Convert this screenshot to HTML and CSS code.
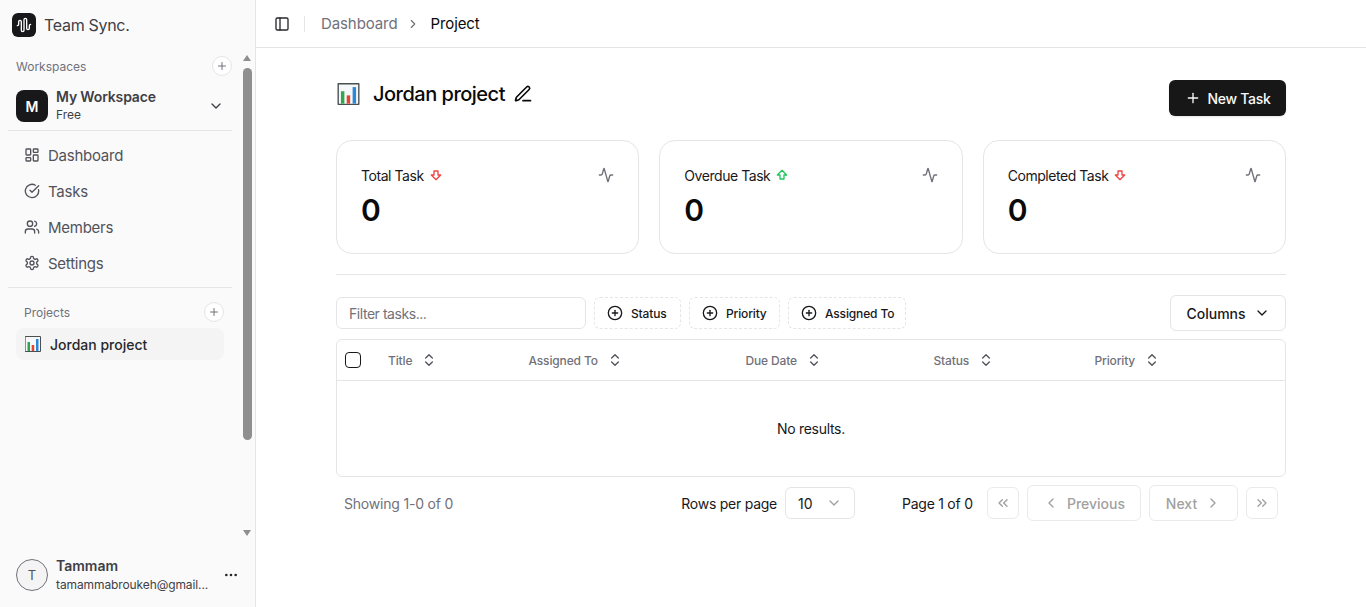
FILE: index.html
```html
<!DOCTYPE html>
<html lang="en">
<head>
    <meta charset="UTF-8">
    <meta name="viewport" content="width=device-width, initial-scale=1.0">
    <title>Team Sync</title>
    <link rel="stylesheet" href="styles.css">
</head>
<body>
    <svg class="sprite" xmlns="http://www.w3.org/2000/svg">
        <symbol id="i-wave" viewBox="0 0 24 24"><path d="M2 13a2 2 0 0 0 2-2V7a2 2 0 0 1 4 0v13a2 2 0 0 0 4 0V4a2 2 0 0 1 4 0v13a2 2 0 0 0 4 0v-4a2 2 0 0 1 2-2"/></symbol>
        <symbol id="i-plus" viewBox="0 0 24 24"><path d="M5 12h14"/><path d="M12 5v14"/></symbol>
        <symbol id="i-down" viewBox="0 0 24 24"><path d="m6 9 6 6 6-6"/></symbol>
        <symbol id="i-left" viewBox="0 0 24 24"><path d="m15 18-6-6 6-6"/></symbol>
        <symbol id="i-right" viewBox="0 0 24 24"><path d="m9 18 6-6-6-6"/></symbol>
        <symbol id="i-first" viewBox="0 0 24 24"><path d="m11 17-5-5 5-5"/><path d="m18 17-5-5 5-5"/></symbol>
        <symbol id="i-last" viewBox="0 0 24 24"><path d="m6 17 5-5-5-5"/><path d="m13 17 5-5-5-5"/></symbol>
        <symbol id="i-grid" viewBox="0 0 24 24"><rect x="3" y="3" width="7" height="9" rx="1"/><rect x="14" y="3" width="7" height="5" rx="1"/><rect x="14" y="12" width="7" height="9" rx="1"/><rect x="3" y="16" width="7" height="5" rx="1"/></symbol>
        <symbol id="i-check" viewBox="0 0 24 24"><path d="M21.801 10A10 10 0 1 1 17 3.335"/><path d="m9 11 3 3L22 4"/></symbol>
        <symbol id="i-users" viewBox="0 0 24 24"><path d="M16 21v-2a4 4 0 0 0-4-4H6a4 4 0 0 0-4 4v2"/><circle cx="9" cy="7" r="4"/><path d="M22 21v-2a4 4 0 0 0-3-3.87"/><path d="M16 3.13a4 4 0 0 1 0 7.75"/></symbol>
        <symbol id="i-gear" viewBox="0 0 24 24"><path d="M12.22 2h-.44a2 2 0 0 0-2 2v.18a2 2 0 0 1-1 1.73l-.43.25a2 2 0 0 1-2 0l-.15-.08a2 2 0 0 0-2.73.73l-.22.38a2 2 0 0 0 .73 2.73l.15.1a2 2 0 0 1 1 1.72v.51a2 2 0 0 1-1 1.74l-.15.09a2 2 0 0 0-.73 2.73l.22.38a2 2 0 0 0 2.73.73l.15-.08a2 2 0 0 1 2 0l.43.25a2 2 0 0 1 1 1.73V20a2 2 0 0 0 2 2h.44a2 2 0 0 0 2-2v-.18a2 2 0 0 1 1-1.73l.43-.25a2 2 0 0 1 2 0l.15.08a2 2 0 0 0 2.73-.73l.22-.39a2 2 0 0 0-.73-2.73l-.15-.08a2 2 0 0 1-1-1.74v-.5a2 2 0 0 1 1-1.74l.15-.09a2 2 0 0 0 .73-2.73l-.22-.38a2 2 0 0 0-2.73-.73l-.15.08a2 2 0 0 1-2 0l-.43-.25a2 2 0 0 1-1-1.73V4a2 2 0 0 0-2-2z"/><circle cx="12" cy="12" r="3"/></symbol>
        <symbol id="i-panel" viewBox="0 0 24 24"><rect x="3" y="3" width="18" height="18" rx="2"/><path d="M9 3v18"/></symbol>
        <symbol id="i-pencil" viewBox="0 0 24 24"><path d="M12 20h9"/><path d="M16.376 3.622a1 1 0 0 1 3.002 3.002L7.368 18.635a2 2 0 0 1-.855.506l-2.872.838a.5.5 0 0 1-.62-.62l.838-2.872a2 2 0 0 1 .506-.854z"/></symbol>
        <symbol id="i-activity" viewBox="0 0 24 24"><path d="M22 12h-2.48a2 2 0 0 0-1.93 1.46l-2.35 8.36a.25.25 0 0 1-.48 0L9.24 2.18a.25.25 0 0 0-.48 0l-2.35 8.36A2 2 0 0 1 4.49 12H2"/></symbol>
        <symbol id="i-arrow-down" viewBox="0 0 24 24"><path d="M15 6v6h4l-7 7-7-7h4V6h6z"/></symbol>
        <symbol id="i-arrow-up" viewBox="0 0 24 24"><path d="M9 18v-6H5l7-7 7 7h-4v6H9z"/></symbol>
        <symbol id="i-sort" viewBox="0 0 24 24"><path d="m7 15 5 5 5-5"/><path d="m7 9 5-5 5 5"/></symbol>
        <symbol id="i-circle-plus" viewBox="0 0 24 24"><circle cx="12" cy="12" r="10"/><path d="M8 12h8"/><path d="M12 8v8"/></symbol>
        <symbol id="i-dots" viewBox="0 0 24 24"><circle cx="12" cy="12" r="1"/><circle cx="19" cy="12" r="1"/><circle cx="5" cy="12" r="1"/></symbol>
        <symbol id="i-chart" viewBox="0 0 16 16">
            <rect x="0.5" y="0.5" width="15" height="15" fill="#f5f7f8" stroke="#4a4f52" stroke-width="1"/>
            <rect x="2.5" y="6" width="2.5" height="9" fill="#2ea84f" stroke="none"/>
            <rect x="6.7" y="9" width="2.5" height="6" fill="#e2462f" stroke="none"/>
            <rect x="11" y="3" width="2.5" height="12" fill="#2b87d8" stroke="none"/>
        </symbol>
    </svg>

    <div class="app">
        <aside class="sidebar">
            <div class="brand">
                <span class="brand-logo"><svg class="icon-16"><use href="#i-wave"/></svg></span>
                <span class="brand-name">Team Sync.</span>
            </div>

            <div class="sidebar-scroll">
                <div class="group-head group-head-ws">
                    <span>Workspaces</span>
                    <button class="round-add"><svg class="icon-12"><use href="#i-plus"/></svg></button>
                </div>
                <div class="switcher">
                    <span class="ws-avatar">M</span>
                    <div class="ws-text">
                        <div class="ws-name">My Workspace</div>
                        <div class="ws-plan">Free</div>
                    </div>
                    <svg class="icon-16 ws-chevron"><use href="#i-down"/></svg>
                </div>
                <div class="side-line"></div>
                <nav class="side-nav">
                    <a href="#"><svg class="icon-16"><use href="#i-grid"/></svg>Dashboard</a>
                    <a href="#"><svg class="icon-16"><use href="#i-check"/></svg>Tasks</a>
                    <a href="#"><svg class="icon-16"><use href="#i-users"/></svg>Members</a>
                    <a href="#"><svg class="icon-16"><use href="#i-gear"/></svg>Settings</a>
                </nav>
                <div class="side-line"></div>
                <div class="group-head group-head-proj">
                    <span>Projects</span>
                    <button class="round-add"><svg class="icon-12"><use href="#i-plus"/></svg></button>
                </div>
                <a href="#" class="project-link"><svg class="icon-chart-sm"><use href="#i-chart"/></svg>Jordan project</a>
            </div>

            <div class="user-box">
                <span class="user-avatar">T</span>
                <div class="user-text">
                    <div class="user-name">Tammam</div>
                    <div class="user-mail">tamammabroukeh@gmail...</div>
                </div>
                <svg class="icon-16 user-dots"><use href="#i-dots"/></svg>
            </div>

            <div class="fake-scroll">
                <span class="scroll-up"></span>
                <span class="scroll-thumb"></span>
                <span class="scroll-down"></span>
            </div>
        </aside>

        <div class="content">
            <header class="topbar">
                <svg class="icon-16 panel-icon"><use href="#i-panel"/></svg>
                <span class="topbar-sep"></span>
                <span class="crumb">Dashboard</span>
                <svg class="icon-14 crumb-arrow"><use href="#i-right"/></svg>
                <span class="crumb crumb-now">Project</span>
            </header>

            <main class="page">
                <div class="page-head">
                    <div class="page-title">
                        <svg class="icon-chart-lg"><use href="#i-chart"/></svg>
                        <h1>Jordan project</h1>
                        <svg class="icon-20"><use href="#i-pencil"/></svg>
                    </div>
                    <button class="btn-new"><svg class="icon-16"><use href="#i-plus"/></svg>New Task</button>
                </div>

                <section class="stats">
                    <div class="stat-card">
                        <div class="stat-top">
                            <span class="stat-label">Total Task <svg class="icon-16 arrow-red"><use href="#i-arrow-down"/></svg></span>
                            <svg class="icon-16 stat-pulse"><use href="#i-activity"/></svg>
                        </div>
                        <div class="stat-num">0</div>
                    </div>
                    <div class="stat-card">
                        <div class="stat-top">
                            <span class="stat-label">Overdue Task <svg class="icon-16 arrow-green"><use href="#i-arrow-up"/></svg></span>
                            <svg class="icon-16 stat-pulse"><use href="#i-activity"/></svg>
                        </div>
                        <div class="stat-num">0</div>
                    </div>
                    <div class="stat-card">
                        <div class="stat-top">
                            <span class="stat-label">Completed Task <svg class="icon-16 arrow-red"><use href="#i-arrow-down"/></svg></span>
                            <svg class="icon-16 stat-pulse"><use href="#i-activity"/></svg>
                        </div>
                        <div class="stat-num">0</div>
                    </div>
                </section>

                <div class="page-line"></div>

                <div class="toolbar">
                    <input class="filter-input" type="text" placeholder="Filter tasks...">
                    <button class="chip chip-status"><svg class="icon-16"><use href="#i-circle-plus"/></svg>Status</button>
                    <button class="chip chip-priority"><svg class="icon-16"><use href="#i-circle-plus"/></svg>Priority</button>
                    <button class="chip chip-assigned"><svg class="icon-16"><use href="#i-circle-plus"/></svg>Assigned To</button>
                    <button class="btn-columns">Columns<svg class="icon-16"><use href="#i-down"/></svg></button>
                </div>

                <div class="table-box">
                    <div class="table-head">
                        <span class="checkbox"></span>
                        <span class="th">Title<svg class="icon-16"><use href="#i-sort"/></svg></span>
                        <span class="th">Assigned To<svg class="icon-16"><use href="#i-sort"/></svg></span>
                        <span class="th">Due Date<svg class="icon-16"><use href="#i-sort"/></svg></span>
                        <span class="th">Status<svg class="icon-16"><use href="#i-sort"/></svg></span>
                        <span class="th">Priority<svg class="icon-16"><use href="#i-sort"/></svg></span>
                    </div>
                    <div class="table-empty">No results.</div>
                </div>

                <div class="pager">
                    <span class="pager-count">Showing 1-0 of 0</span>
                    <div class="pager-right">
                        <span class="pager-label">Rows per page</span>
                        <div class="rows-select">10<svg class="icon-16"><use href="#i-down"/></svg></div>
                        <span class="pager-page">Page 1 of 0</span>
                        <button class="pg-btn pg-square"><svg class="icon-16"><use href="#i-first"/></svg></button>
                        <button class="pg-btn pg-prev"><svg class="icon-16"><use href="#i-left"/></svg>Previous</button>
                        <button class="pg-btn pg-next">Next<svg class="icon-16"><use href="#i-right"/></svg></button>
                        <button class="pg-btn pg-square"><svg class="icon-16"><use href="#i-last"/></svg></button>
                    </div>
                </div>
            </main>
        </div>
    </div>
</body>
</html>
```

FILE: styles.css
```css
* {
    box-sizing: border-box;
}

html, body {
    height: 100%;
}

body {
    margin: 0;
    font-family: Inter, "Liberation Sans", sans-serif;
    color: #0a0a0a;
    background-color: #fff;
    overflow: hidden;
}

button, input {
    font-family: inherit;
}

a {
    text-decoration: none;
    color: inherit;
}

svg {
    fill: none;
    stroke: currentColor;
    stroke-width: 2;
    stroke-linecap: round;
    stroke-linejoin: round;
    flex-shrink: 0;
}

.sprite {
    display: none;
}

.icon-12 { width: 12px; height: 12px; }
.icon-14 { width: 14px; height: 14px; }
.icon-16 { width: 16px; height: 16px; }
.icon-20 { width: 20px; height: 20px; }

.app {
    display: flex;
    height: 100%;
}

/* sidebar */
.sidebar {
    position: relative;
    width: 256px;
    flex-shrink: 0;
    display: flex;
    flex-direction: column;
    background-color: #fafafa;
    border-right: 1px solid #e5e5e5;
}

.brand {
    display: flex;
    align-items: center;
    gap: 8px;
    height: 50px;
    padding-left: 12px;
}

.brand-logo {
    width: 24px;
    height: 24px;
    border-radius: 6px;
    background-color: #18181b;
    color: #fff;
    display: flex;
    align-items: center;
    justify-content: center;
}

.brand-name {
    font-size: 16px;
    line-height: 18px;
    margin-bottom: 1px;
    color: #3f3f46;
    letter-spacing: -0.3px;
}

.sidebar-scroll {
    flex: 1;
    width: 240px;
}

.group-head {
    display: flex;
    align-items: center;
    justify-content: space-between;
    font-size: 12px;
    color: #71717a;
}

.group-head-ws {
    padding: 6px 8px 0 16px;
    height: 26px;
}

.group-head-proj {
    padding: 8px 16px 0 24px;
    height: 40px;
}

.round-add {
    width: 20px;
    height: 20px;
    padding: 0;
    border: 1px solid #e5e5e5;
    border-radius: 50%;
    background-color: #fff;
    color: #71717a;
    display: flex;
    align-items: center;
    justify-content: center;
}

.switcher {
    display: flex;
    align-items: center;
    gap: 8px;
    padding: 0 16px;
    height: 42px;
    margin-top: 9px;
    margin-bottom: 3px;
}

.ws-avatar {
    width: 32px;
    height: 32px;
    border-radius: 8px;
    background-color: #18181b;
    color: #fff;
    font-size: 14px;
    font-weight: 600;
    display: flex;
    align-items: center;
    justify-content: center;
}

.ws-text {
    flex: 1;
    line-height: 18px;
}

.ws-name {
    font-size: 14px;
    font-weight: 600;
    color: #3f3f46;
    letter-spacing: -0.15px;
}

.ws-plan {
    font-size: 12px;
    color: #3f3f46;
}

.ws-chevron {
    color: #3f3f46;
}

.side-line {
    height: 1px;
    margin: 0 8px;
    background-color: #e5e5e5;
}

.side-nav {
    padding: 6px 16px;
}

.side-nav a {
    display: flex;
    align-items: center;
    gap: 8px;
    height: 36px;
    padding-left: 8px;
    font-size: 15px;
    letter-spacing: -0.25px;
    color: #52525b;
}

.project-link {
    display: flex;
    align-items: center;
    gap: 9px;
    height: 32px;
    margin: 0 16px;
    padding-left: 9px;
    border-radius: 8px;
    background-color: #f4f4f5;
    font-size: 14px;
    font-weight: 500;
    color: #27272a;
}

.icon-chart-sm {
    width: 16px;
    height: 16px;
}

.user-box {
    display: flex;
    align-items: center;
    gap: 8px;
    height: 64px;
    padding: 0 16px;
}

.user-avatar {
    width: 32px;
    height: 32px;
    border-radius: 50%;
    border: 1px solid #71717a;
    background-color: #f4f4f5;
    color: #52525b;
    font-size: 13px;
    display: flex;
    align-items: center;
    justify-content: center;
    flex-shrink: 0;
}

.user-text {
    width: 155px;
    line-height: 18px;
}

.user-name {
    font-size: 14px;
    font-weight: 600;
    color: #3f3f46;
}

.user-mail {
    margin-top: 1px;
    font-size: 12px;
    letter-spacing: -0.1px;
    color: #3f3f46;
    white-space: nowrap;
}

.user-dots {
    margin-left: 4px;
    color: #27272a;
}

/* drawn over the sidebar edge */
.fake-scroll {
    position: absolute;
    top: 52px;
    right: 3px;
    width: 9px;
    height: 488px;
}

.scroll-thumb {
    position: absolute;
    top: 16px;
    left: 0;
    width: 9px;
    height: 372px;
    border-radius: 5px;
    background-color: #8f8f8f;
}

.scroll-up {
    position: absolute;
    top: 3px;
    left: 0;
    border-left: 4.5px solid transparent;
    border-right: 4.5px solid transparent;
    border-bottom: 6px solid #8f8f8f;
}

.scroll-down {
    position: absolute;
    bottom: 4px;
    left: 0;
    border-left: 4.5px solid transparent;
    border-right: 4.5px solid transparent;
    border-top: 6px solid #8f8f8f;
}

/* main */
.content {
    flex: 1;
    min-width: 0;
}

.topbar {
    display: flex;
    align-items: center;
    height: 48px;
    padding-left: 18px;
    border-bottom: 1px solid #e5e5e5;
    font-size: 15px;
    letter-spacing: -0.1px;
}

.panel-icon {
    color: #27272a;
}

.topbar-sep {
    width: 1px;
    height: 16px;
    margin: 0 16px 0 14px;
    background-color: #e5e5e5;
}

.crumb {
    color: #71717a;
}

.crumb-now {
    color: #0a0a0a;
}

.crumb-arrow {
    margin: 0 10px 0 9px;
    color: #71717a;
}

.page {
    padding: 32px 80px 0;
}

.page-head {
    display: flex;
    justify-content: space-between;
    height: 60px;
}

.page-title {
    display: flex;
    align-items: center;
    height: 28px;
    margin-left: 1px;
}

.page-title h1 {
    margin: 0 8px 0 13px;
    font-size: 20px;
    font-weight: 500;
    letter-spacing: -0.5px;
}

.icon-chart-lg {
    width: 23px;
    height: 22px;
}

.btn-new {
    display: flex;
    align-items: center;
    gap: 7px;
    width: 117px;
    height: 36px;
    justify-content: center;
    border: none;
    border-radius: 6px;
    background-color: #171717;
    color: #fafafa;
    font-size: 14px;
    font-weight: 500;
    letter-spacing: -0.3px;
    box-shadow: 0 1px 2px rgba(0, 0, 0, 0.1);
}

.stats {
    display: grid;
    grid-template-columns: repeat(3, 1fr);
    gap: 20px;
}

.stat-card {
    height: 114px;
    padding: 24px;
    border: 1px solid #e5e5e5;
    border-radius: 16px;
    background-color: #fff;
}

.stat-top {
    display: flex;
    justify-content: space-between;
    align-items: center;
    height: 20px;
}

.stat-label {
    display: flex;
    align-items: center;
    gap: 4px;
    font-size: 14px;
    letter-spacing: -0.45px;
    color: #18181b;
}

.arrow-red { color: #ef4444; }
.arrow-green { color: #22c55e; }

.stat-pulse {
    color: #71717a;
}

.stat-num {
    margin-top: 7px;
    font-size: 30px;
    line-height: 36px;
    font-weight: 600;
}

.page-line {
    height: 1px;
    margin-top: 20px;
    background-color: #e5e5e5;
}

.toolbar {
    display: flex;
    align-items: center;
    gap: 8px;
    margin-top: 20px;
    height: 36px;
}

.filter-input {
    width: 250px;
    height: 32px;
    padding: 0 12px;
    border: 1px solid #e5e5e5;
    border-radius: 6px;
    font-size: 14px;
    letter-spacing: -0.45px;
    color: #0a0a0a;
}

.filter-input::placeholder {
    color: #71717a;
}

.chip {
    display: flex;
    align-items: center;
    gap: 8px;
    height: 32px;
    padding: 0 0 0 12px;
    border: 1px dashed #e5e5e5;
    border-radius: 6px;
    background-color: #fff;
    font-size: 12px;
    font-weight: 500;
    letter-spacing: -0.15px;
    color: #18181b;
}

.chip-status { width: 87px; }
.chip-priority { width: 91px; }
.chip-assigned { width: 118px; }

.btn-columns {
    display: flex;
    align-items: center;
    justify-content: center;
    gap: 8px;
    margin-left: auto;
    width: 116px;
    height: 36px;
    border: 1px solid #e5e5e5;
    border-radius: 6px;
    background-color: #fff;
    font-size: 14px;
    font-weight: 500;
    color: #18181b;
}

.table-box {
    margin-top: 8px;
    border: 1px solid #e5e5e5;
    border-radius: 6px;
}

.table-head {
    display: grid;
    grid-template-columns: 43px 140.5px 217px 188px 161px 1fr;
    align-items: center;
    height: 41px;
    padding-left: 8px;
    border-bottom: 1px solid #e5e5e5;
}

.checkbox {
    width: 16px;
    height: 16px;
    border: 1px solid #18181b;
    border-radius: 4px;
}

.th {
    display: flex;
    align-items: center;
    gap: 9px;
    font-size: 12px;
    font-weight: 500;
    letter-spacing: -0.15px;
    color: #71717a;
}

.th svg {
    color: #52525b;
}

.table-empty {
    height: 95px;
    display: flex;
    align-items: center;
    justify-content: center;
    font-size: 14px;
    letter-spacing: -0.3px;
    color: #18181b;
}

.pager {
    display: flex;
    align-items: center;
    justify-content: space-between;
    height: 36px;
    margin-top: 8px;
    padding: 0 8px;
}

.pager-count {
    font-size: 14px;
    letter-spacing: -0.2px;
    color: #71717a;
}

.pager-right {
    display: flex;
    align-items: center;
    gap: 8px;
}

.pager-label,
.pager-page {
    font-size: 14px;
    color: #18181b;
    letter-spacing: -0.25px;
}

.pager-page {
    width: 70px;
    margin: 0 7px 0 39px;
    white-space: nowrap;
}

.rows-select {
    display: flex;
    align-items: center;
    justify-content: space-between;
    width: 70px;
    height: 32px;
    padding: 0 12px;
    border: 1px solid #e5e5e5;
    border-radius: 6px;
    font-size: 14px;
    color: #18181b;
}

.rows-select svg {
    color: #a1a1aa;
}

.pg-btn {
    display: flex;
    align-items: center;
    justify-content: center;
    gap: 8px;
    border: 1px solid #e5e5e5;
    border-radius: 6px;
    background-color: #fff;
    color: #8a8a8a;
    font-size: 14px;
    font-weight: 500;
    opacity: 0.8;
}

.pg-square {
    width: 32px;
    height: 32px;
    padding: 0;
}

.pg-prev {
    width: 114px;
    height: 36px;
}

.pg-next {
    width: 89px;
    height: 36px;
}
```
